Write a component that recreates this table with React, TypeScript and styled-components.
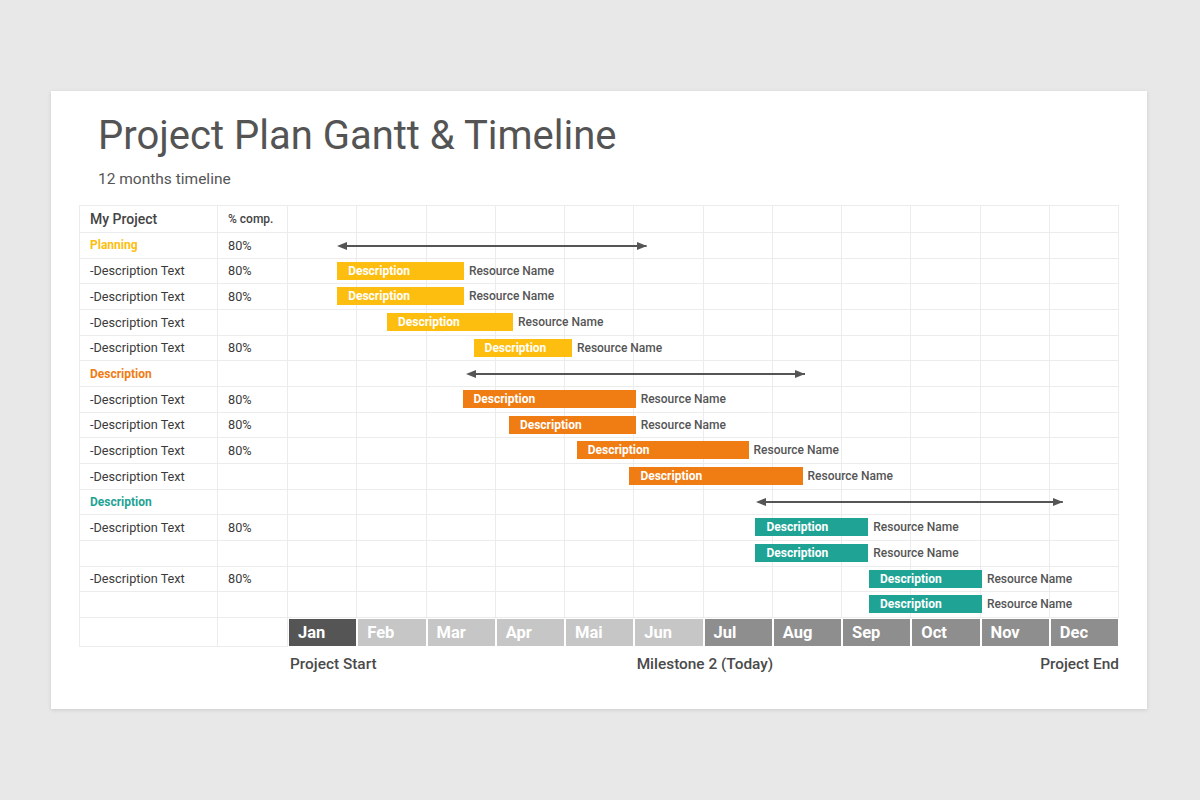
import React from "react";
import styled, { createGlobalStyle } from "styled-components";

const GlobalStyle = createGlobalStyle`
  html, body {
    margin: 0;
    padding: 0;
    background: #e9e8e9;
    font-family: Roboto, "Liberation Sans", Arial, sans-serif;
  }
`;

const YELLOW = "#fdbe10";
const ORANGE = "#f07c14";
const TEAL = "#1fa395";

const COLS = "138px 70px repeat(12, 1fr)";

const Page = styled.div`
  height: 100vh;
  display: flex;
  align-items: center;
  justify-content: center;
`;

const Slide = styled.div`
  width: 1096px;
  height: 618px;
  margin-right: 2px;
  box-sizing: border-box;
  background: #fff;
  box-shadow: 0 1px 4px rgba(0, 0, 0, 0.12);
  padding: 21px 28px 0;
  color: #555;
`;

const Title = styled.h1`
  margin: 0 0 0 19px;
  font-size: 40px;
  line-height: 47px;
  font-weight: 400;
  color: #545454;
`;

const Subtitle = styled.div`
  margin: 10px 0 0 19px;
  font-size: 15.5px;
  line-height: 20px;
  color: #555;
`;

const Table = styled.div`
  margin-top: 16px;
  border-top: 1px solid #ececec;
  border-left: 1px solid #ececec;
`;

const Row = styled.div<{ $h: number }>`
  display: grid;
  grid-template-columns: ${COLS};
  height: ${(p) => p.$h}px;
`;

const Cell = styled.div<{ $col: number }>`
  grid-row: 1;
  grid-column: ${(p) => p.$col};
  border-right: 1px solid #ececec;
  border-bottom: 1px solid #ececec;
  display: flex;
  align-items: center;
  min-width: 0;
  white-space: nowrap;
`;

const LabelCell = styled(Cell)<{ $color?: string; $bold?: boolean; $size?: number }>`
  padding-left: 10px;
  font-size: ${(p) => p.$size ?? 12.7}px;
  font-weight: ${(p) => (p.$bold ? 700 : 400)};
  color: ${(p) => p.$color ?? "#3a3a3a"};
`;

const HeadCell = styled(Cell)<{ $size: number }>`
  padding-left: 10px;
  font-size: ${(p) => p.$size}px;
  font-weight: 500;
  color: #444;
`;

const Lane = styled.div`
  grid-column: 3 / 15;
  grid-row: 1;
  position: relative;
  pointer-events: none;
`;

const Bar = styled.div<{ $color: string }>`
  position: absolute;
  top: 3px;
  height: 18px;
  background: ${(p) => p.$color};
  color: #fff;
  font-size: 12px;
  font-weight: 700;
  line-height: 18px;
  padding-left: 11px;
  box-sizing: border-box;
  white-space: nowrap;
`;

const Resource = styled.span`
  position: absolute;
  left: 100%;
  top: 0;
  margin-left: 5px;
  color: #555;
  font-weight: 500;
  font-size: 12px;
`;

const ArrowWrap = styled.div`
  position: absolute;
  top: 50%;
  height: 10px;
  margin-top: -5px;
`;

const MonthCell = styled.div<{ $col: number; $tone: "dark" | "light" | "mid" }>`
  grid-row: 1;
  grid-column: ${(p) => p.$col};
  margin: 1px;
  background: ${(p) => (p.$tone === "dark" ? "#555555" : p.$tone === "light" ? "#c6c6c6" : "#8e8e8e")};
  color: #fff;
  font-size: 16.5px;
  font-weight: 700;
  display: flex;
  align-items: center;
  padding-left: 9px;
`;

const Footer = styled.div`
  display: grid;
  grid-template-columns: ${COLS};
  margin-top: 7px;
  font-size: 15.4px;
  line-height: 20px;
  font-weight: 500;
  color: #4a4a4a;
`;

const Mark = styled.div<{ $col: string; $end?: boolean }>`
  grid-column: ${(p) => p.$col};
  justify-self: ${(p) => (p.$end ? "end" : "start")};
  padding-left: ${(p) => (p.$end ? 0 : 3)}px;
  white-space: nowrap;
`;

const pct = (m: number) => `${(m / 12) * 100}%`;

const Arrow = ({ from, to }: { from: number; to: number }) => (
  <ArrowWrap style={{ left: pct(from), width: pct(to - from) }}>
    <svg width="100%" height="10" style={{ display: "block" }}>
      <line x1="4" y1="5" x2="100%" y2="5" stroke="#555" strokeWidth="2" />
      <polygon points="0,5 10,1 10,9" fill="#555" />
    </svg>
    <svg width="10" height="10" style={{ position: "absolute", right: 0, top: 0 }}>
      <polygon points="10,5 0,1 0,9" fill="#555" />
    </svg>
  </ArrowWrap>
);

type Task = {
  label: string;
  pct?: string;
  bar?: [number, number];
};

type Group = {
  name: string;
  color: string;
  span: [number, number];
  tasks: Task[];
};

const groups: Group[] = [
  {
    name: "Planning",
    color: YELLOW,
    span: [0.71, 5.18],
    tasks: [
      { label: "-Description Text", pct: "80%", bar: [0.71, 2.54] },
      { label: "-Description Text", pct: "80%", bar: [0.71, 2.54] },
      { label: "-Description Text", bar: [1.43, 3.25] },
      { label: "-Description Text", pct: "80%", bar: [2.68, 4.1] },
    ],
  },
  {
    name: "Description",
    color: ORANGE,
    span: [2.57, 7.47],
    tasks: [
      { label: "-Description Text", pct: "80%", bar: [2.52, 5.02] },
      { label: "-Description Text", pct: "80%", bar: [3.19, 5.02] },
      { label: "-Description Text", pct: "80%", bar: [4.17, 6.65] },
      { label: "-Description Text", bar: [4.93, 7.43] },
    ],
  },
  {
    name: "Description",
    color: TEAL,
    span: [6.76, 11.19],
    tasks: [
      { label: "-Description Text", pct: "80%", bar: [6.75, 8.38] },
      { label: "", bar: [6.75, 8.38] },
      { label: "-Description Text", pct: "80%", bar: [8.39, 10.02] },
      { label: "", bar: [8.39, 10.02] },
    ],
  },
];

const months = ["Jan", "Feb", "Mar", "Apr", "Mai", "Jun", "Jul", "Aug", "Sep", "Oct", "Nov", "Dec"];
const ROW_H = 385 / 15;

const EmptyMonths = () => (
  <>
    {months.map((m, i) => (
      <Cell key={m} $col={i + 3} />
    ))}
  </>
);

export default function App() {
  return (
    <>
      <GlobalStyle />
      <Page>
        <Slide>
          <Title>Project Plan Gantt &amp; Timeline</Title>
          <Subtitle>12 months timeline</Subtitle>
          <Table>
            <Row $h={27}>
              <HeadCell $col={1} $size={14}>
                My Project
              </HeadCell>
              <HeadCell $col={2} $size={12}>
                % comp.
              </HeadCell>
              <EmptyMonths />
            </Row>
            {groups.map((g, gi) => (
              <React.Fragment key={gi}>
                <Row $h={ROW_H}>
                  <LabelCell $col={1} $color={g.color} $bold $size={12}>
                    {g.name}
                  </LabelCell>
                  <LabelCell $col={2}>{gi === 0 ? "80%" : ""}</LabelCell>
                  <EmptyMonths />
                  <Lane>
                    <Arrow from={g.span[0]} to={g.span[1]} />
                  </Lane>
                </Row>
                {g.tasks.map((t, ti) => (
                  <Row $h={ROW_H} key={ti}>
                    <LabelCell $col={1}>{t.label}</LabelCell>
                    <LabelCell $col={2}>{t.pct ?? ""}</LabelCell>
                    <EmptyMonths />
                    {t.bar && (
                      <Lane>
                        <Bar
                          $color={g.color}
                          style={{ left: pct(t.bar[0]), width: pct(t.bar[1] - t.bar[0]) }}
                        >
                          Description
                          <Resource>Resource Name</Resource>
                        </Bar>
                      </Lane>
                    )}
                  </Row>
                ))}
              </React.Fragment>
            ))}
            <Row $h={29}>
              <Cell $col={1} />
              <Cell $col={2} />
              {months.map((m, i) => (
                <MonthCell key={m} $col={i + 3} $tone={i === 0 ? "dark" : i < 6 ? "light" : "mid"}>
                  {m}
                </MonthCell>
              ))}
            </Row>
          </Table>
          <Footer>
            <Mark $col="3 / span 5">Project Start</Mark>
            <Mark $col="8 / span 4">Milestone 2 (Today)</Mark>
            <Mark $col="12 / span 3" $end>
              Project End
            </Mark>
          </Footer>
        </Slide>
      </Page>
    </>
  );
}
